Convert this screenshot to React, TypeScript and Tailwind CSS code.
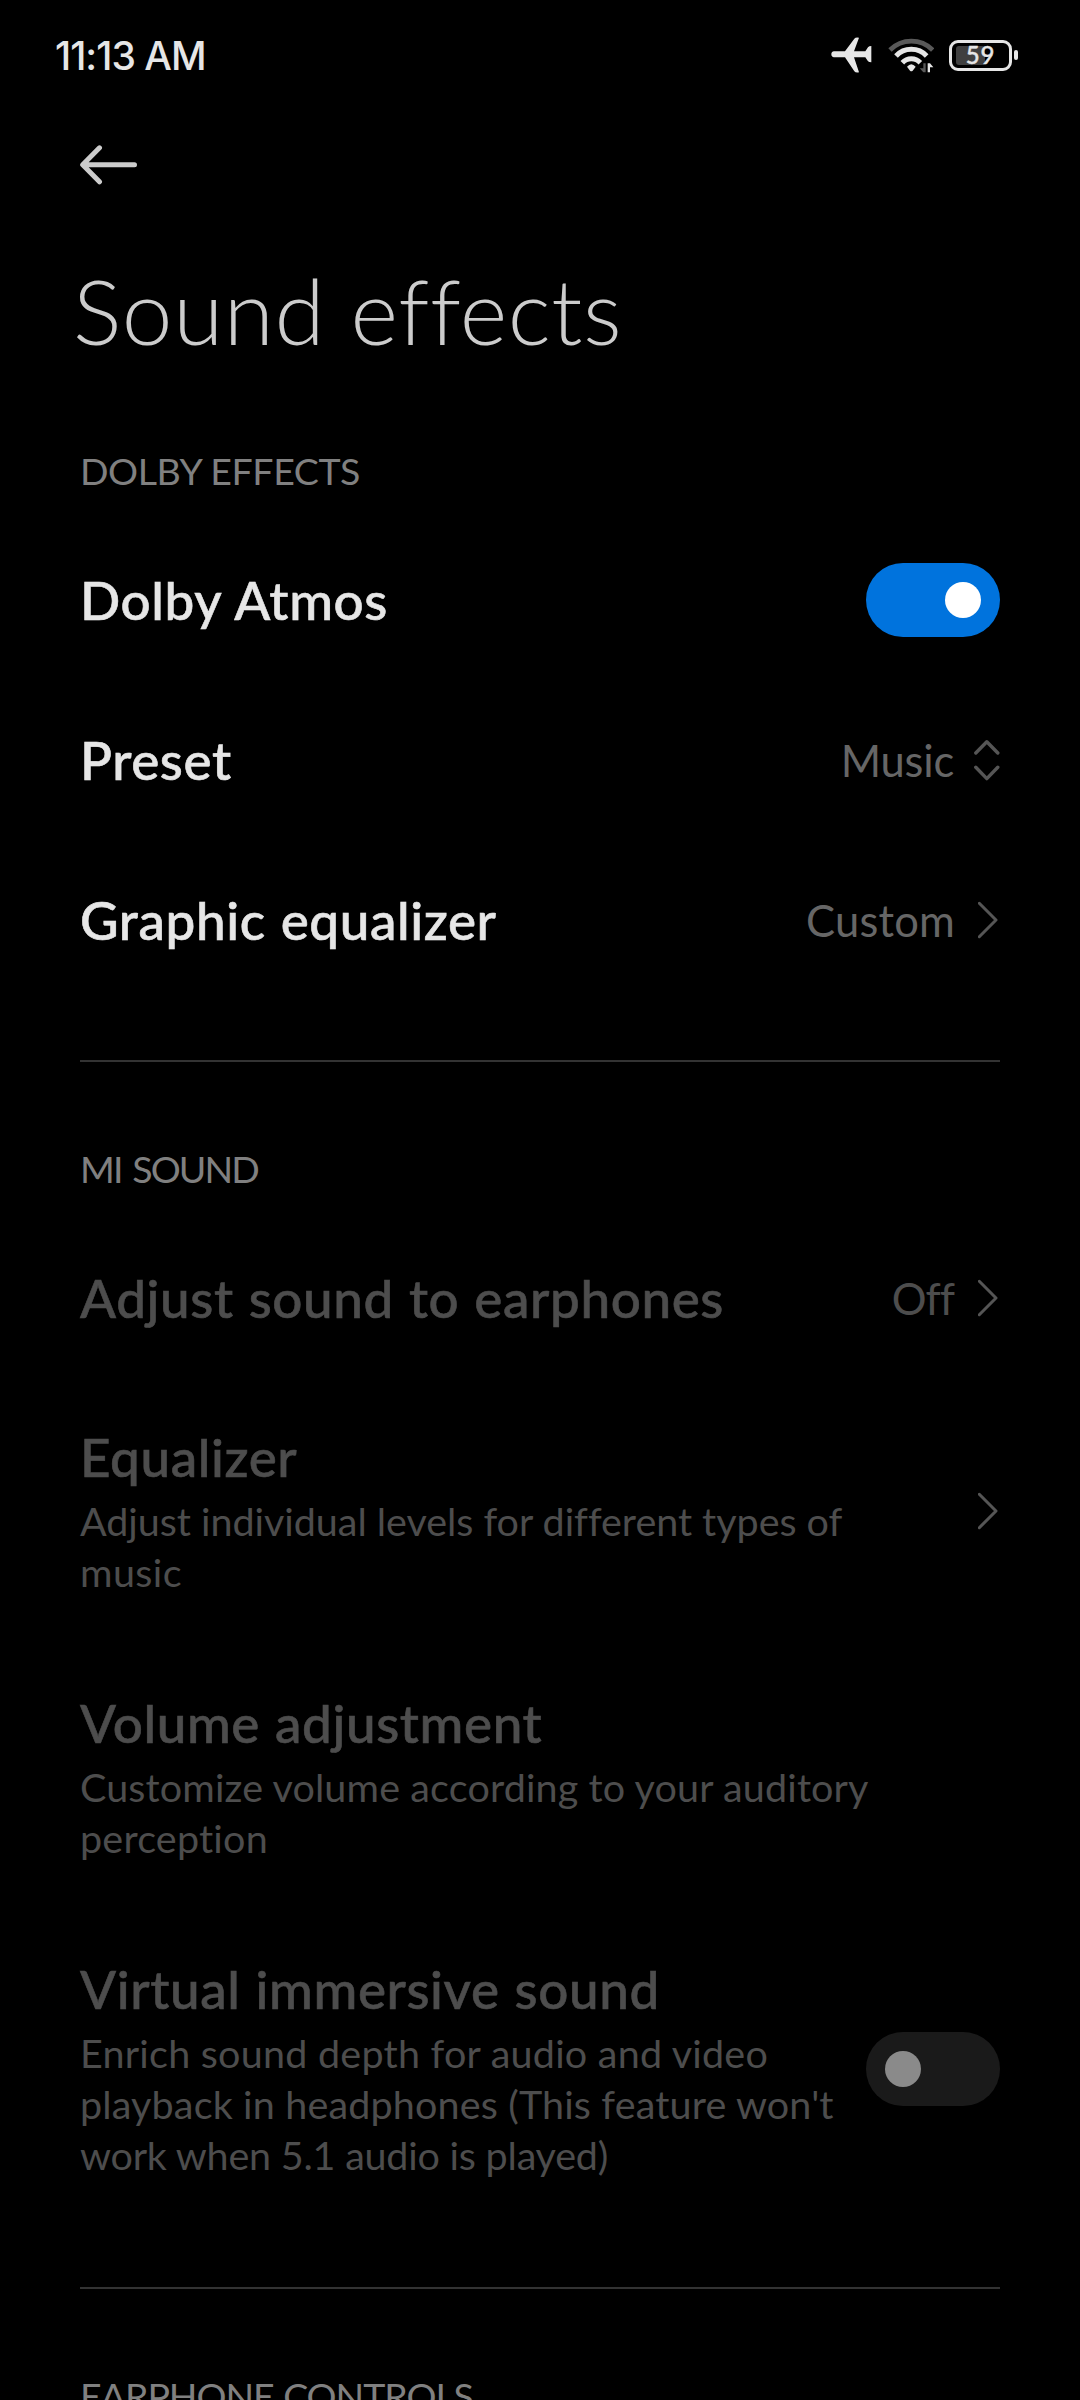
import type { ReactNode } from 'react';
import clsx from 'clsx';

const PlaneIcon = () => (
  <svg className="mr-px h-[36px] w-[41px]" viewBox="95 51 123 108" fill="#e6e6e6">
    <path d="M104 94H137L165 56Q169 51 179 53L164 94H198L206 82Q209 78 216 78V127Q209 127 206 124L198 112H164L179 157Q169 159 165 154L137 112H104Q96 111 96 103Q96 95 104 94Z" />
  </svg>
);

const WifiIcon = () => (
  <svg className="h-[36px] w-[46px]" viewBox="263 53 138 108" fill="none" stroke="#e6e6e6" strokeWidth="15">
    <path d="M269 92A90 90 0 0 1 397 92" stroke="#595959" strokeWidth="14" />
    <path d="M287 110A63 63 0 0 1 379 110" />
    <path d="M306 130A37 37 0 0 1 360 130" />
    <path d="M320 142Q333 127 346 142L337 154Q333 158 329 154Z" fill="#e6e6e6" stroke="none" />
    <path d="M369 132H376V159H369L358 147H369Z" fill="#595959" stroke="none" />
    <path d="M382 132H389L399 144H389V159H382Z" fill="#e6e6e6" stroke="none" />
  </svg>
);

const Battery = ({ level }: { level: number }) => (
  <div className="flex items-center gap-[2px]">
    <div className="relative flex h-[31px] w-[63px] items-center justify-center rounded-[9px] border-[3px] border-[#e6e6e6]">
      <div className="absolute top-[3px] left-[4px] h-[19px] w-[29px] rounded-[3px] bg-[#404040]" />
      <span className="relative text-[24px] leading-none font-medium tracking-[0.8px] text-[#e6e6e6] [-webkit-text-stroke:0.4px]">
        {level}
      </span>
    </div>
    <div className="h-[10px] w-[4px] rounded-[2px] bg-[#e6e6e6]" />
  </div>
);

const BackIcon = () => (
  <svg className="h-[42px] w-[60px]" viewBox="0 0 60 42" fill="none" stroke="#cccccc" strokeWidth="5" strokeLinecap="round" strokeLinejoin="round">
    <path d="M54.5 20.8H4M19.5 3.8L2.7 20.8L19.5 37.8" />
  </svg>
);

const ChevronRight = () => (
  <svg className="h-[40px] w-[22px] shrink-0" viewBox="0 0 22 40" fill="none" stroke="#555555" strokeWidth="3" strokeLinecap="round" strokeLinejoin="round">
    <path d="M1.3 3.3L18 20L1.3 36.7" />
  </svg>
);

const ChevronUpDown = () => (
  <svg className="h-[44px] w-[26px] shrink-0" viewBox="0 0 26 44" fill="none" stroke="#555555" strokeWidth="3.4" strokeLinecap="round" strokeLinejoin="round">
    <path d="M1.8 15L12.8 3.7L23.8 15M1.8 29.3L12.8 40.6L23.8 29.3" />
  </svg>
);

const Switch = ({ on }: { on: boolean }) => (
  <div
    className={clsx(
      'flex h-[74px] w-[134px] shrink-0 items-center rounded-full px-[19px]',
      on ? 'justify-end bg-[#0073dd]' : 'justify-start bg-[#1a1a1a]'
    )}
  >
    <div className={clsx('size-[36px] rounded-full', on ? 'bg-white' : 'bg-[#8a8a8a]')} />
  </div>
);

type RowProps = {
  title: string;
  lines?: { text: string; tracking: string }[];
  value?: ReactNode;
  disabled?: boolean;
  children?: ReactNode;
};

const Row = ({ title, lines, value, disabled, children }: RowProps) => (
  <div className={clsx('flex items-center justify-between', lines ? 'py-[47px]' : 'h-[160px]')}>
    <div className={disabled ? 'text-[#4d4d4d]' : 'text-[#e6e6e6]'}>
      <div className="text-[53px] leading-[64px] font-medium tracking-[0.6px] whitespace-nowrap [word-spacing:1px] [-webkit-text-stroke:0.6px]">
        {title}
      </div>
      {lines && (
        <p className="mt-[6px] text-[39.5px] leading-[51px] whitespace-nowrap">
          {lines.map((line) => (
            <span key={line.text} className={clsx('block', line.tracking)}>
              {line.text}
            </span>
          ))}
        </p>
      )}
    </div>
    <div className="flex items-center">
      {value && (
        <span className={clsx('text-[43.5px] leading-[52px]', disabled ? 'text-[#4d4d4d]' : 'text-[#666666]')}>{value}</span>
      )}
      {children}
    </div>
  </div>
);

const SectionLabel = ({ children, className }: { children: ReactNode; className: string }) => (
  <h2 className={clsx('mt-[83px] mb-[25px] h-[48px] text-[37.5px] leading-[48px] whitespace-nowrap text-[#808080]', className)}>
    {children}
  </h2>
);

const Divider = () => <div className="mt-[60px] h-[2px] bg-[#333333]" />;

export default function App() {
  return (
    <div className="h-[2400px] w-[1080px] overflow-hidden bg-black font-['Lato',sans-serif]">
      {/* Status bar */}
      <div className="flex h-[110px] items-center justify-between pr-[62px] pl-[55px]">
        <span className="pt-[2px] font-['Inter',sans-serif] text-[39px] leading-[48px] font-medium tracking-[-1px] text-[#e6e6e6]">
          11:13 AM
        </span>
        <div className="flex items-center gap-[15px]">
          <PlaneIcon />
          <WifiIcon />
          <Battery level={59} />
        </div>
      </div>

      <main className="px-[80px]">
        <div className="flex h-[109px] items-center">
          <BackIcon />
        </div>
        <h1 className="mt-[36px] -mb-px -ml-[7px] text-[91px] leading-[110px] font-light tracking-[0.6px] text-[#cccccc]">
          Sound effects
        </h1>

        <SectionLabel className="tracking-[-0.4px]">DOLBY EFFECTS</SectionLabel>
        <Row title="Dolby Atmos">
          <Switch on />
        </Row>
        <Row title="Preset" value={<span className="mr-[20px] tracking-[-0.2px]">Music</span>}>
          <ChevronUpDown />
        </Row>
        <Row title="Graphic equalizer" value={<span className="mr-[23px] tracking-[0.2px]">Custom</span>}>
          <ChevronRight />
        </Row>
        <Divider />

        <SectionLabel className="tracking-[-1.9px] [word-spacing:3px]">MI SOUND</SectionLabel>
        <Row title="Adjust sound to earphones" disabled value={<span className="mr-[24px] tracking-[-1px]">Off</span>}>
          <ChevronRight />
        </Row>
        <Row
          title="Equalizer"
          disabled
          lines={[
            { text: 'Adjust individual levels for different types of', tracking: 'tracking-[-0.04px]' },
            { text: 'music', tracking: 'tracking-[0.4px]' },
          ]}
        >
          <ChevronRight />
        </Row>
        <Row
          title="Volume adjustment"
          disabled
          lines={[
            { text: 'Customize volume according to your auditory', tracking: 'tracking-[0.13px]' },
            { text: 'perception', tracking: 'tracking-[0.2px]' },
          ]}
        />
        <Row
          title="Virtual immersive sound"
          disabled
          lines={[
            { text: 'Enrich sound depth for audio and video', tracking: 'tracking-[0.23px]' },
            { text: "playback in headphones (This feature won't", tracking: 'tracking-[0.15px]' },
            { text: 'work when 5.1 audio is played)', tracking: 'tracking-[-0.22px]' },
          ]}
        >
          <Switch on={false} />
        </Row>
        <Divider />

        <SectionLabel className="tracking-[-1.05px] [word-spacing:1px]">EARPHONE CONTROLS</SectionLabel>
      </main>
    </div>
  );
}
